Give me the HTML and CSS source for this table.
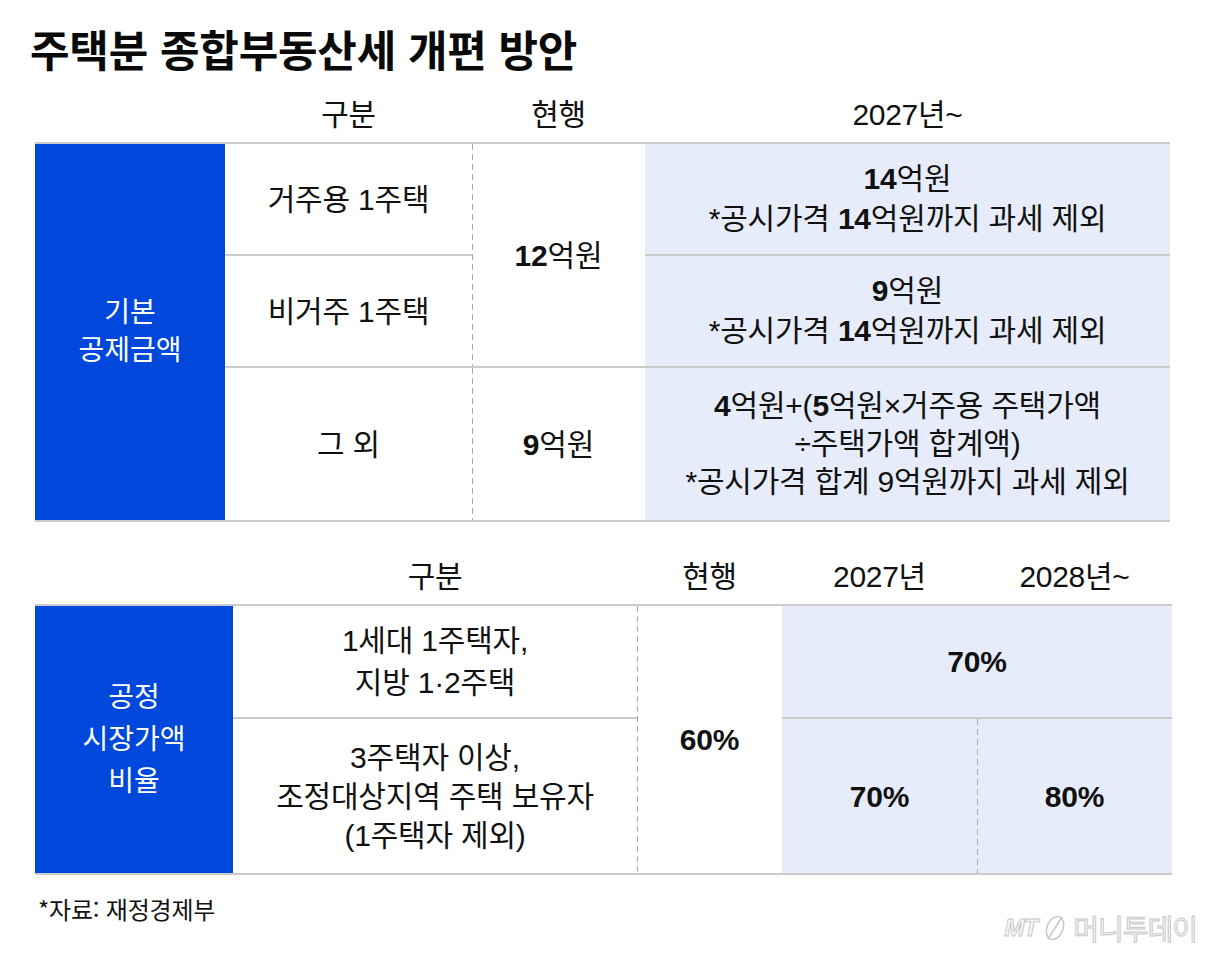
FILE: index.html
```html
<!DOCTYPE html>
<html lang="ko">
<head>
<meta charset="utf-8">
<title>주택분 종합부동산세 개편 방안</title>
<link rel="stylesheet" href="styles.css">
</head>
<body>
<div class="page">
  <h1 class="title">주택분 종합부동산세 개편 방안</h1>

  <div class="head head1">
    <div></div><div>구분</div><div>현행</div><div>2027년~</div>
  </div>
  <div class="t1">
    <div class="side t1-side">기본<br>공제금액</div>
    <div class="cell t1-c2 r1">거주용 1주택</div>
    <div class="cell t1-c2 r2 line">비거주 1주택</div>
    <div class="cell t1-c2 r3 line">그 외</div>
    <div class="cell t1-c3 r12 dash"><span class="b">12</span>억원</div>
    <div class="cell t1-c3 r3 line dash"><span class="b">9</span>억원</div>
    <div class="cell t1-c4 r1 new"><span><span class="b">14</span>억원<br>*공시가격 <span class="b">14</span>억원까지 과세 제외</span></div>
    <div class="cell t1-c4 r2 new line"><span><span class="b">9</span>억원<br>*공시가격 <span class="b">14</span>억원까지 과세 제외</span></div>
    <div class="cell t1-c4 r3 new line tight"><span><span class="b">4</span>억원+(<span class="b">5</span>억원×거주용 주택가액<br>÷주택가액 합계액)<br>*공시가격 합계 9억원까지 과세 제외</span></div>
  </div>

  <div class="head head2">
    <div></div><div>구분</div><div>현행</div><div>2027년</div><div>2028년~</div>
  </div>
  <div class="t2">
    <div class="side t2-side">공정<br>시장가액<br>비율</div>
    <div class="cell t2-c2 r1 wide"><span>1세대 1주택자,<br>지방 1·2주택</span></div>
    <div class="cell t2-c2 r2 line tight"><span>3주택자 이상,<br>조정대상지역 주택 보유자<br>(1주택자 제외)</span></div>
    <div class="cell t2-c3 r12 dash"><span class="b">60%</span></div>
    <div class="cell t2-c45 r1 new"><span class="b">70%</span></div>
    <div class="cell t2-c4 r2 new line"><span class="b">70%</span></div>
    <div class="cell t2-c5 r2 new line dash"><span class="b">80%</span></div>
  </div>

  <div class="foot">
    <div class="src">*자료: 재정경제부</div>
    <div class="logo">
      <span class="mt">MT</span>
      <svg class="orb" width="26" height="30" viewBox="0 0 26 30">
        <ellipse cx="13" cy="15" rx="8" ry="12" transform="rotate(22 13 15)" fill="none" stroke="#c8c8c8" stroke-width="1.6"/>
        <path d="M6 26 L20 4" stroke="#c8c8c8" stroke-width="1.4" fill="none"/>
      </svg>
      <span class="mn">머니투데이</span>
    </div>
  </div>
</div>
</body>
</html>
```

FILE: styles.css
```css
body {
  margin: 0;
  background: #ffffff;
  color: #111111;
  font-family: "Liberation Sans", "Noto Sans CJK KR", sans-serif;
}

.page {
  width: 1205px;
  height: 965px;
  box-sizing: border-box;
  padding-left: 35px;
  overflow: hidden;
}

.title {
  margin: 0 0 0 -5px;
  height: 76px;
  box-sizing: border-box;
  padding-top: 23px;
  font-family: "Noto Sans CJK KR", sans-serif;
  font-size: 43px;
  line-height: 50px;
  font-weight: 700;
  letter-spacing: -0.2px;
  color: #0a0a0a;
}

.head {
  display: grid;
  align-items: end;
  box-sizing: border-box;
  padding-bottom: 8px;
  font-size: 30px;
  line-height: 39px;
  letter-spacing: -0.3px;
  text-align: center;
}

.head1 {
  grid-template-columns: 190px 247px 173px 525px;
  height: 66px;
}

.head2 {
  grid-template-columns: 198px 404px 145px 195px 195px;
  height: 82px;
}

.t1,
.t2 {
  display: grid;
  border-top: 2px solid #cbcbcb;
  border-bottom: 2px solid #cbcbcb;
  font-size: 30px;
  line-height: 39px;
  letter-spacing: -0.2px;
}

.t1 {
  width: 1135px;
  grid-template-columns: 190px 247px 173px 525px;
  grid-template-rows: 110px 112px 154px;
}

.t2 {
  width: 1137px;
  grid-template-columns: 198px 404px 145px 195px 195px;
  grid-template-rows: 111px 156px;
}

.side {
  background: #0048dc;
  color: #ffffff;
  display: flex;
  align-items: center;
  justify-content: center;
  text-align: center;
  font-size: 28px;
  letter-spacing: 0;
}

.t1-side {
  grid-column: 1;
  grid-row: 1 / 4;
  line-height: 38px;
}

.t2-side {
  grid-column: 1;
  grid-row: 1 / 3;
  line-height: 42px;
}

.cell {
  display: flex;
  align-items: center;
  justify-content: center;
  text-align: center;
  box-sizing: border-box;
}

.line {
  border-top: 2px solid #cbcbcb;
}

.new {
  background-color: #e6ecf9;
}

.dash {
  background-image: linear-gradient(#a9a9a9 60%, transparent 60%);
  background-size: 1px 10px;
  background-repeat: repeat-y;
  background-position: left top;
}

.r1 { grid-row: 1; }
.r2 { grid-row: 2; }
.r3 { grid-row: 3; }
.r12 { grid-row: 1 / 3; }

.t1-c2 { grid-column: 2; }
.t1-c3 { grid-column: 3; }
.t1-c4 { grid-column: 4; line-height: 40px; }
.t1-c4.tight { line-height: 38px; }

.t2-c2 { grid-column: 2; }
.t2-c2.wide { line-height: 42px; }
.t2-c3 { grid-column: 3; }
.t2-c45 { grid-column: 4 / 6; }
.t2-c4 { grid-column: 4; }
.t2-c5 { grid-column: 5; }

.b {
  font-weight: 700;
}

.foot {
  display: flex;
  justify-content: space-between;
  align-items: flex-start;
  width: 1162px;
  margin-top: 19px;
}

.src {
  margin-left: 3px;
  font-size: 24px;
  line-height: 30px;
  letter-spacing: -0.2px;
  font-family: "Noto Sans CJK KR", sans-serif;
}

.logo {
  display: flex;
  align-items: center;
  gap: 5px;
  margin-top: 18px;
}

.mt {
  font-family: "Liberation Sans", sans-serif;
  font-style: italic;
  font-weight: 700;
  font-size: 24px;
  letter-spacing: -1px;
  color: #f8f8f8;
  -webkit-text-stroke: 1px #c8c8c8;
}

.mn {
  font-family: "Noto Sans CJK KR", sans-serif;
  font-size: 28px;
  line-height: 32px;
  letter-spacing: -1px;
  color: #f8f8f8;
  -webkit-text-stroke: 1px #c8c8c8;
}
```
